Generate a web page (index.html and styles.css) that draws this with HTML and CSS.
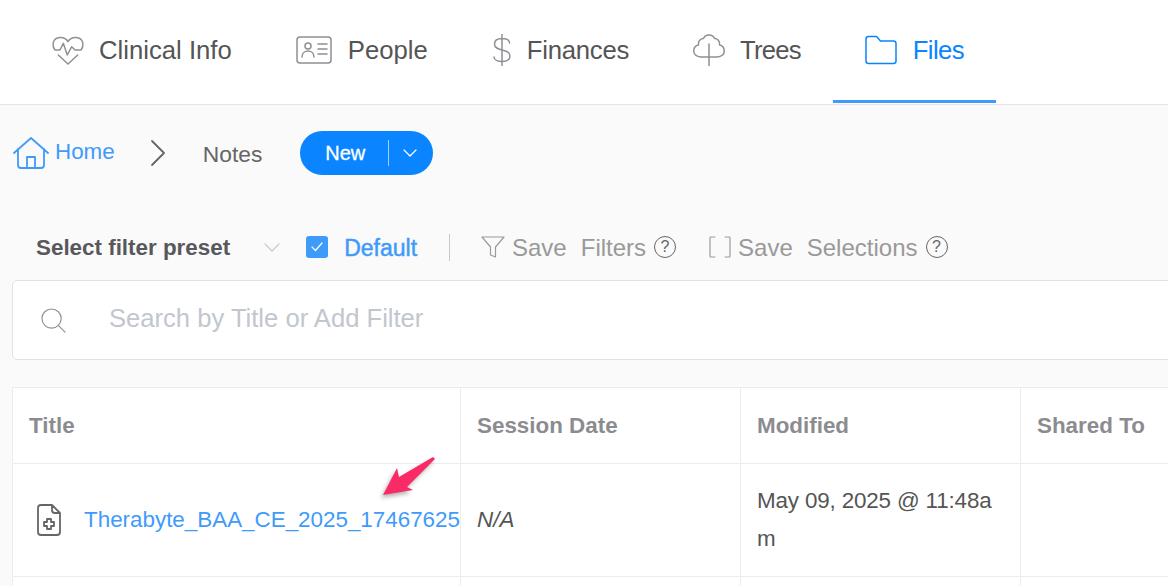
FILE: index.html
```html
<!DOCTYPE html>
<html lang="en">
<head>
    <meta charset="UTF-8">
    <title>Notes</title>
    <link rel="stylesheet" href="styles.css">
</head>
<body>
    <nav class="tabs">
        <a class="tab">
            <svg class="tab-icon" viewBox="0 0 32 32"><path d="M3 16 C0 12 0 4 8 3.500 C11.500 3.300 14.500 5 16 7.700 C17.500 5 20.500 3.300 24 3.500 C32 4 32 12 29 16 H23 L19.700 12.700 L15.300 21 L11.300 9.300 L8 16 H3 M6.300 21 L16 30 L25.700 21"/></svg>
            Clinical Info
        </a>
        <a class="tab">
            <svg class="tab-icon tab-icon-wide" viewBox="0 0 36 28"><rect x="1" y="1" width="34" height="26" rx="3"/><circle cx="12" cy="10" r="3"/><path d="M6 21 C6 13 18 13 18 21 M22 8 H31 M22 13 H31 M22 18 H31"/></svg>
            People
        </a>
        <a class="tab tab-finances">
            <svg class="tab-icon tab-icon-dollar" viewBox="0 0 20 32"><path d="M17.500 9 C17.500 6 14 4.500 10 4.500 C6 4.500 2.500 6 2.500 10 C2.500 14 6 15 10 16 C14 17 18 18 18 22 C18 26 14 27.500 10 27.500 C6 27.500 2 26 2 23 M10 0.500 V31.500"/></svg>
            Finances
        </a>
        <a class="tab tab-trees">
            <svg class="tab-icon" viewBox="0 0 32 32"><path d="M16 32 V10 M16 23 H8 C3 23 0.500 20 0.800 16.500 C1 13.500 3 11.500 5.500 11 C5 7 7.500 4.500 10.500 4.500 C11.500 2 13.500 1 16 1 C18.500 1 20.500 2 21.500 4.500 C24.500 4.500 27 7 26.500 11 C29 11.500 31 13.500 31.200 16.500 C31.500 20 29 23 24 23 H16"/></svg>
            Trees
        </a>
        <a class="tab tab-active">
            <svg class="tab-icon tab-icon-files" viewBox="0 0 32 32"><path d="M1 5 C1 3.500 2 2.500 3.500 2.500 H11.500 L15.500 7 H28.500 C30 7 31 8 31 9.500 V27 C31 28.500 30 29.500 28.500 29.500 H3.500 C2 29.500 1 28.500 1 27 Z"/></svg>
            Files
        </a>
    </nav>

    <main class="content">
        <div class="crumbs">
            <a class="crumb-home">
                <svg class="home-icon" viewBox="0 0 36 32"><path d="M1 16 L18 1 L35 16 M5 12 V28 C5 30 6 31 8 31 H28 C30 31 31 30 31 28 V12 M14 31 V20 H22 V31"/></svg>
                Home
            </a>
            <svg class="crumb-sep" viewBox="0 0 16 28"><path d="M2 2 L14 14 L2 26"/></svg>
            <span class="crumb-current">Notes</span>
            <div class="new-btn">
                <span class="new-label">New</span>
                <span class="new-divider"></span>
                <svg class="new-caret" viewBox="0 0 14 8"><path d="M1 1 L7 7 L13 1"/></svg>
            </div>
        </div>

        <div class="filters">
            <b class="preset-label">Select filter preset</b>
            <svg class="preset-caret" viewBox="0 0 16 9"><path d="M1 1 L8 8 L15 1"/></svg>
            <span class="checkbox">
                <svg viewBox="0 0 12 10"><path d="M1 5 L4.500 8.500 L11 1"/></svg>
            </span>
            <span class="preset-name">Default</span>
            <span class="filters-divider"></span>
            <svg class="filter-icon" viewBox="0 0 24 24"><path d="M1 2 H23 L14.500 12 V22 L9.500 20 V12 Z"/></svg>
            <span class="save-text">Save</span>
            <span class="save-text save-second">Filters</span>
            <span class="help">?</span>
            <svg class="bracket-icon" viewBox="0 0 22 22"><path d="M6 1 H2 C1.400 1 1 1.400 1 2 V20 C1 20.600 1.400 21 2 21 H6 M16 1 H20 C20.600 1 21 1.400 21 2 V20 C21 20.600 20.600 21 20 21 H16"/></svg>
            <span class="save-text">Save</span>
            <span class="save-text save-second">Selections</span>
            <span class="help">?</span>
        </div>

        <div class="search">
            <svg class="search-icon" viewBox="0 0 26 26"><circle cx="11" cy="11" r="10"/><path d="M18 18 L25 25"/></svg>
            <span class="search-text">Search by Title or Add Filter</span>
        </div>

        <table class="files">
            <thead>
                <tr>
                    <th class="col-title">Title</th>
                    <th class="col-date">Session Date</th>
                    <th class="col-date">Modified</th>
                    <th class="col-shared">Shared To</th>
                </tr>
            </thead>
            <tbody>
                <tr>
                    <td class="cell-title">
                        <div class="file-name">
                            <svg class="file-icon" viewBox="0 0 24 32"><path d="M15 1 H4 C2 1 1 2 1 4 V28 C1 30 2 31 4 31 H20 C22 31 23 30 23 28 V9 Z M15 1 V6 C15 8 16 9 18 9 H23 M10 15 H14 V18 H17 V22 H14 V25 H10 V22 H7 V18 H10 Z"/></svg>
                            <a class="file-link">Therabyte_BAA_CE_2025_17467625</a>
                        </div>
                    </td>
                    <td><i>N/A</i></td>
                    <td class="cell-modified">May 09, 2025 @ 11:48am</td>
                    <td></td>
                </tr>
                <tr>
                    <td></td>
                    <td></td>
                    <td></td>
                    <td></td>
                </tr>
            </tbody>
        </table>
    </main>

    <svg class="arrow" viewBox="0 0 60 44"><polygon points="0,40 14,13 16,22 50,2 52,4 24,32 30,35"/></svg>
</body>
</html>
```

FILE: styles.css
```css
html, body {
    height: 100%;
}
body {
    margin: 0;
    overflow: hidden;
    background-color: #fafafa;
    font-family: "Liberation Sans", Arial, sans-serif;
    color: #555;
}
svg {
    fill: none;
    stroke-linecap: round;
    stroke-linejoin: round;
    flex-shrink: 0;
}

/* top tabs */
.tabs {
    display: flex;
    height: 104px;
    padding-left: 20px;
    background-color: #fff;
    border-bottom: 1px solid #e4e4e6;
}
.tab {
    display: flex;
    align-items: center;
    height: 100px;
    padding: 0 32px;
    border-bottom: 3px solid transparent;
    font-size: 25.7px;
    color: #555;
}
.tab-finances {
    letter-spacing: -0.25px;
}
.tab-trees {
    letter-spacing: -0.8px;
}
.tab-icon {
    width: 32px;
    height: 32px;
    margin-right: 15px;
    stroke: #8f9094;
    stroke-width: 1.500;
}
.tab-icon-wide {
    width: 36px;
    margin-right: 16px;
}
.tab-icon-dollar {
    width: 20px;
    margin-right: 15px;
}
.tab-icon-files {
    margin-right: 16px;
}
.tab-active {
    letter-spacing: -0.6px;
    color: #0a84ff;
    border-bottom-color: #3f9bfa;
}
.tab-active .tab-icon {
    stroke: #0a84ff;
}

.content {
    height: 481px;
    padding-left: 12px;
    overflow: hidden;
}

/* breadcrumb row */
.crumbs {
    display: flex;
    align-items: center;
    height: 44px;
    margin-top: 26px;
}
.crumb-home {
    display: flex;
    align-items: center;
    margin-left: 1px;
    padding-bottom: 2px;
    font-size: 22.4px;
    color: #3f9bfa;
}
.home-icon {
    width: 36px;
    height: 32px;
    margin: 2px 6px 0 0;
    stroke: #3f9bfa;
    stroke-width: 1.800;
}
.crumb-sep {
    width: 16px;
    height: 28px;
    margin-left: 35px;
    stroke: #666;
    stroke-width: 1.800;
}
.crumb-current {
    margin-left: 37px;
    padding-top: 2px;
    font-size: 22.8px;
    color: #666;
}
.new-btn {
    display: flex;
    align-items: center;
    width: 133px;
    height: 44px;
    margin-left: 38px;
    border-radius: 22px;
    background-color: #0a84ff;
    color: #fff;
}
.new-label {
    margin-left: 25px;
    font-size: 20px;
    -webkit-text-stroke: 0.3px #fff;
}
.new-divider {
    width: 1px;
    height: 26px;
    margin-left: 23px;
    background-color: #a5cffa;
}
.new-caret {
    width: 14px;
    height: 8px;
    margin-left: 14px;
    stroke: #fff;
    stroke-width: 1.200;
}

/* filter preset row */
.filters {
    display: flex;
    align-items: center;
    height: 28px;
    margin-top: 58px;
    padding-left: 24px;
}
.preset-label {
    padding-top: 2px;
    font-size: 22.4px;
    color: #58585c;
}
.preset-caret {
    width: 16px;
    height: 9px;
    margin-left: 34px;
    stroke: #c8c8d2;
    stroke-width: 1.200;
}
.checkbox {
    display: flex;
    align-items: center;
    justify-content: center;
    width: 22px;
    height: 22px;
    margin-left: 26px;
    border-radius: 3px;
    background-color: #3f9bfa;
}
.checkbox svg {
    width: 12px;
    height: 10px;
    stroke: #fff;
    stroke-width: 1.200;
}
.preset-name {
    margin-left: 16px;
    padding-top: 2px;
    font-size: 23px;
    color: #3f9bfa;
    -webkit-text-stroke: 0.5px #3f9bfa;
}
.filters-divider {
    width: 1px;
    height: 27px;
    margin: 0 31px 0 32px;
    background-color: #c8c8cc;
}
.filter-icon {
    width: 24px;
    height: 24px;
    stroke: #9a9a9e;
    stroke-width: 1.200;
}
.save-text {
    margin-left: 7px;
    padding-top: 2px;
    font-size: 24px;
    color: #999;
}
.save-second {
    margin-left: 14px;
}
.help {
    display: flex;
    align-items: center;
    justify-content: center;
    box-sizing: border-box;
    width: 22px;
    height: 22px;
    margin-left: 8px;
    border: 1.500px solid #666;
    border-radius: 50%;
    font-size: 16px;
    color: #666;
}
.bracket-icon {
    width: 22px;
    height: 22px;
    margin-left: 33px;
    stroke: #9a9a9e;
    stroke-width: 1.200;
}

/* search box */
.search {
    display: flex;
    align-items: center;
    box-sizing: border-box;
    width: 1200px;
    height: 80px;
    margin-top: 19px;
    padding-left: 28px;
    background-color: #fff;
    border: 1px solid #e2e2e4;
    border-radius: 5px;
}
.search-icon {
    width: 25px;
    height: 25px;
    stroke: #8f9094;
    stroke-width: 1.200;
}
.search-text {
    margin-left: 43px;
    padding-bottom: 4px;
    font-size: 25.6px;
    color: #c2c6ce;
}

/* files table */
.files {
    width: 1400px;
    margin-top: 27px;
    border-collapse: collapse;
    table-layout: fixed;
    background-color: #fff;
    font-size: 22.4px;
}
.files th, .files td {
    border: 1px solid #e9ecf3;
    padding: 0 16px;
    overflow: hidden;
    text-align: left;
}
.files th {
    height: 75px;
    color: #8c8c90;
}
.files td {
    height: 112px;
    line-height: 38px;
    word-break: break-all;
    color: #555;
}
.files .cell-modified {
    height: auto;
    padding-top: 18px;
    vertical-align: top;
    letter-spacing: -0.15px;
}
.col-title {
    width: 415px;
}
.col-date {
    width: 247px;
}
.col-shared {
    width: auto;
}
.files .cell-title {
    padding: 0 0 0 24px;
}
.file-name {
    display: flex;
    align-items: center;
}
.file-icon {
    width: 24px;
    height: 32px;
    stroke: #666;
    stroke-width: 1.800;
}
.file-link {
    margin-left: 23px;
    white-space: nowrap;
    color: #3f9bfa;
}

/* annotation arrow over the table */
.arrow {
    position: absolute;
    left: 383px;
    top: 455px;
    width: 60px;
    height: 44px;
    fill: #fa2a66;
    filter: drop-shadow(-2px 3px 2px rgba(0, 0, 0, 0.3));
}
```
